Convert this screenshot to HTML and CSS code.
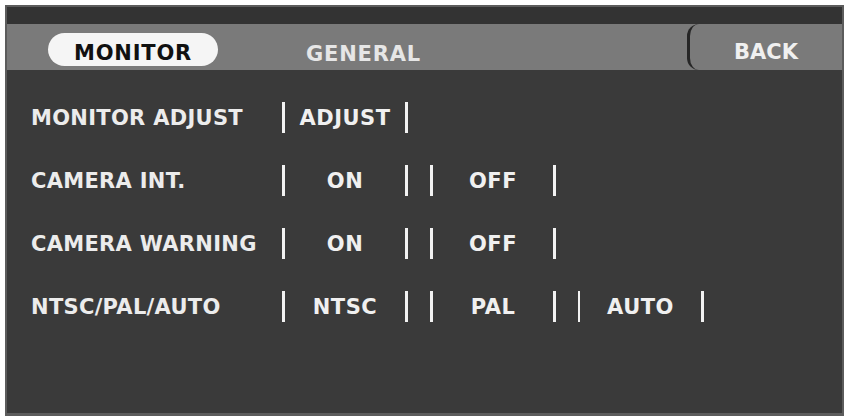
FILE: index.html
```html
<!DOCTYPE html>
<html lang="en">
<head>
    <meta charset="UTF-8">
    <title>Monitor Settings</title>
    <link rel="stylesheet" href="styles.css">
</head>
<body>
    <div class="screen">
        <div class="topband"></div>
        <div class="tabbar">
            <div class="tab active">MONITOR</div>
            <div class="tab">GENERAL</div>
            <div class="back">BACK</div>
        </div>

        <div class="settings">
            <div class="row">
                <div class="label">MONITOR ADJUST</div>
                <div class="opts">
                    <span class="opt">ADJUST</span>
                </div>
            </div>
            <div class="row">
                <div class="label">CAMERA INT.</div>
                <div class="opts">
                    <span class="opt">ON</span>
                    <span class="opt">OFF</span>
                </div>
            </div>
            <div class="row">
                <div class="label">CAMERA WARNING</div>
                <div class="opts">
                    <span class="opt">ON</span>
                    <span class="opt">OFF</span>
                </div>
            </div>
            <div class="row">
                <div class="label">NTSC/PAL/AUTO</div>
                <div class="opts">
                    <span class="opt">NTSC</span>
                    <span class="opt">PAL</span>
                    <span class="opt thin">AUTO</span>
                </div>
            </div>
        </div>
    </div>
</body>
</html>
```

FILE: styles.css
```css
body {
    margin: 0;
    padding: 5px 0 0 5px;
    background: #ffffff;
    font-family: "DejaVu Sans", "Liberation Sans", sans-serif;
    font-weight: bold;
}
.screen {
    width: 835px;
    height: 406px;
    background: #3a3a3a;
    border: 2px solid #5c5c5c;
    border-bottom-width: 3px;
    display: flex;
    flex-direction: column;
}
.topband {
    height: 17px;
    background: #333333;
}
.tabbar {
    height: 46px;
    background: #7a7a7a;
    display: flex;
    align-items: flex-start;
    padding-left: 41px;
}
.tab {
    font-size: 21px;
    letter-spacing: 0.8px;
    color: #e6e6e6;
    line-height: 24px;
    padding-top: 18px;
}
.tab.active {
    width: 170px;
    height: 33px;
    margin-top: 9px;
    padding-top: 0;
    line-height: 40px;
    text-align: center;
    background: #f5f5f5;
    color: #111111;
    border-radius: 17px;
    margin-right: 88px;
}
.back {
    margin-left: auto;
    width: 152px;
    height: 46px;
    line-height: 56px;
    border-left: 3px solid #262626;
    border-radius: 12px 0 0 12px;
    text-align: center;
    font-size: 21px;
    color: #f0f0f0;
}
.settings {
    padding: 16px 0 0 24px;
}
.row {
    height: 63px;
    display: flex;
    align-items: center;
}
.label {
    width: 251px;
    font-size: 21px;
    letter-spacing: 0.3px;
    color: #ececec;
}
.opts {
    display: flex;
    gap: 22px;
}
.opt {
    width: 120px;
    height: 31px;
    line-height: 33px;
    border-left: 3px solid #f2f2f2;
    border-right: 3px solid #f2f2f2;
    text-align: center;
    font-size: 21px;
    letter-spacing: 0.5px;
    color: #f0f0f0;
}
.opt.thin {
    border-left-width: 2px;
    width: 121px;
}
```
